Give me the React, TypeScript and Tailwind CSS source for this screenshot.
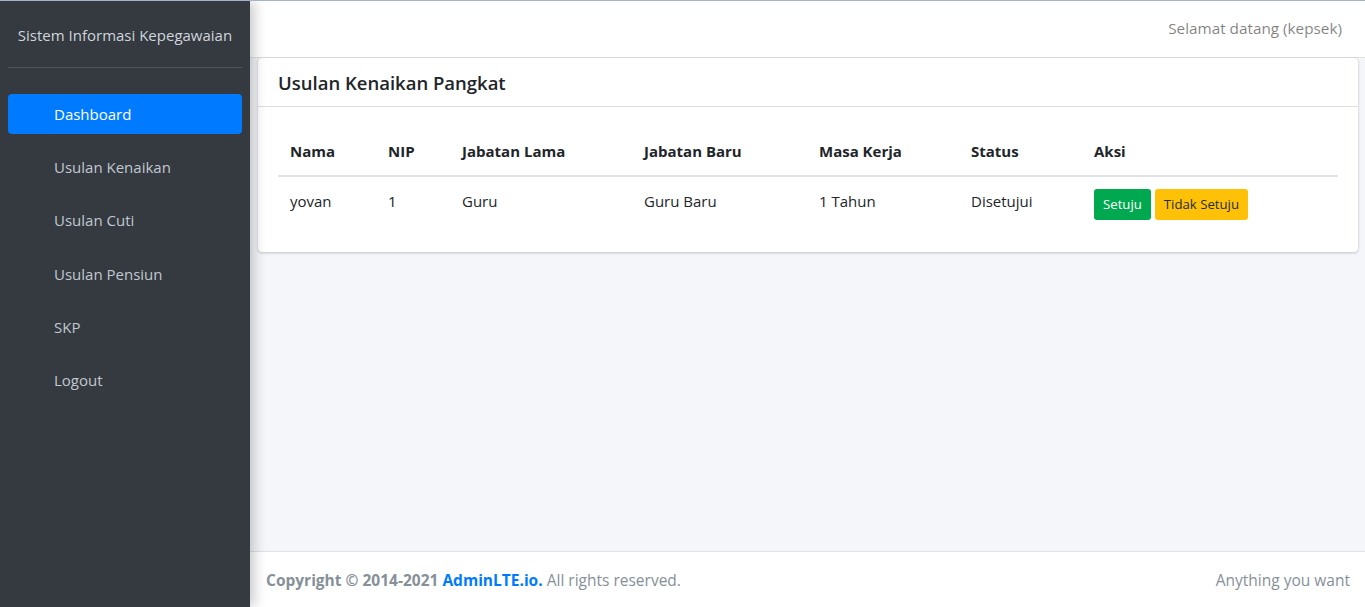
import React from "react";

const font = { fontFamily: '"Open Sans", "Noto Sans", Arial, sans-serif' };

const navItems = ["Usulan Kenaikan", "Usulan Cuti", "Usulan Pensiun", "SKP", "Logout"];

const cols = [
  { label: "Nama", w: "w-[98px]" },
  { label: "NIP", w: "w-[74px]" },
  { label: "Jabatan Lama", w: "w-[182px]" },
  { label: "Jabatan Baru", w: "w-[175px]" },
  { label: "Masa Kerja", w: "w-[152px]" },
  { label: "Status", w: "w-[123px]" },
  { label: "Aksi", w: "" },
];

export default function App() {
  return (
    <div
      className="flex h-[607px] w-full overflow-hidden border-t border-[#a3b3c9] text-[15px] text-[#212529]"
      style={font}
    >
      {/* Sidebar */}
      <aside className="relative z-10 flex w-[250px] shrink-0 flex-col bg-[#343a40] shadow-[4px_0_12px_rgba(0,0,0,0.22)]">
        <div className="mx-2 flex h-[67px] items-center justify-center border-b border-[#4b545c] pt-[3px] text-[15px] text-[#d0d4db]">
          Sistem Informasi Kepegawaian
        </div>
        <nav className="flex flex-col px-2 pt-[26px]">
          <a className="flex h-[40px] items-center rounded bg-[#007bff] pl-[46px] text-white">
            Dashboard
          </a>
          {navItems.map((t) => (
            <a
              key={t}
              className="mt-[13.3px] flex h-[40px] items-center pl-[46px] text-[#c2c7d0]"
            >
              {t}
            </a>
          ))}
        </nav>
      </aside>

      {/* Main */}
      <div className="flex min-w-0 flex-1 flex-col bg-[#f4f6f9]">
        <header className="flex h-[57px] shrink-0 items-center justify-end border-b border-[#dee2e6] bg-white pr-[23px] pb-[2px] text-[15.3px] text-[rgba(0,0,0,0.5)]">
          Selamat datang (kepsek)
        </header>

        <main className="flex-1 pl-2 pr-[7px]">
          <div className="rounded bg-white shadow-[0_0_1px_rgba(0,0,0,0.125),0_1px_3px_rgba(0,0,0,0.2)]">
            <div className="flex h-[49px] items-center border-b border-[rgba(0,0,0,0.125)] px-5 pt-[1px]">
              <h3 className="text-[18.5px] font-semibold text-[#212529]">Usulan Kenaikan Pangkat</h3>
            </div>
            <div className="px-5 pt-5 pb-5">
              <table className="w-full border-collapse text-left">
                <thead>
                  <tr className="border-b-2 border-[#dee2e6]">
                    {cols.map((c) => (
                      <th key={c.label} className={`${c.w} p-3 align-bottom font-bold leading-6`}>
                        {c.label}
                      </th>
                    ))}
                  </tr>
                </thead>
                <tbody>
                  <tr>
                    <td className="p-3 align-top leading-6">yovan</td>
                    <td className="p-3 align-top leading-6">1</td>
                    <td className="p-3 align-top leading-6">Guru</td>
                    <td className="p-3 align-top leading-6">Guru Baru</td>
                    <td className="p-3 align-top leading-6">1 Tahun</td>
                    <td className="p-3 align-top leading-6">Disetujui</td>
                    <td className="p-3 align-top">
                      <div className="flex gap-1">
                        <button className="h-[31px] rounded-[3px] bg-[#00a84f] px-[9px] text-[13.2px] text-white">
                          Setuju
                        </button>
                        <button className="h-[31px] rounded-[3px] bg-[#ffc107] px-[9px] text-[13.2px] text-[#1f2d3d]">
                          Tidak Setuju
                        </button>
                      </div>
                    </td>
                  </tr>
                </tbody>
              </table>
            </div>
          </div>
        </main>

        <footer className="flex h-[56px] shrink-0 items-center justify-between border-t border-[#dee2e6] bg-white pt-[2px] pl-4 pr-[15px] text-[15.5px] text-[#869099]">
          <div>
            <strong className="font-bold">Copyright © 2014-2021 </strong>
            <strong className="font-bold text-[#007bff]">AdminLTE.io.</strong> All rights reserved.
          </div>
          <div>Anything you want</div>
        </footer>
      </div>
    </div>
  );
}
